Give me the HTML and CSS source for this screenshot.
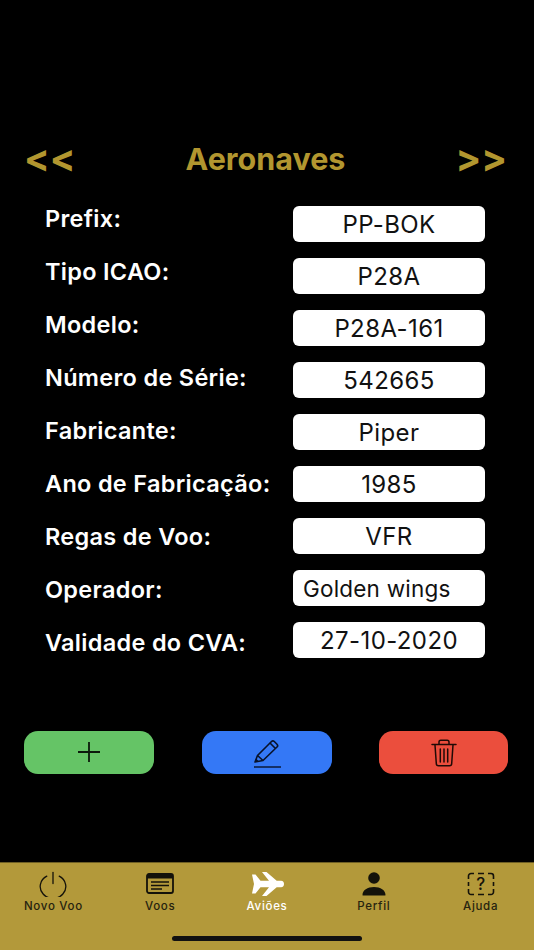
FILE: index.html
```html
<!DOCTYPE html>
<html lang="pt">
<head>
<meta charset="utf-8">
<title>Aeronaves</title>
<link rel="stylesheet" href="styles.css">
</head>
<body>
<div class="screen">
  <header class="header">
    <span class="nav">&lt;&lt;</span>
    <h1 class="title">Aeronaves</h1>
    <span class="nav">&gt;&gt;</span>
  </header>
  <main class="form">
    <div class="labels">
      <div class="label">Prefix:</div>
      <div class="label">Tipo ICAO:</div>
      <div class="label">Modelo:</div>
      <div class="label">Número de Série:</div>
      <div class="label">Fabricante:</div>
      <div class="label">Ano de Fabricação:</div>
      <div class="label">Regas de Voo:</div>
      <div class="label">Operador:</div>
      <div class="label">Validade do CVA:</div>
    </div>
    <div class="fields">
      <div class="field">PP-BOK</div>
      <div class="field">P28A</div>
      <div class="field">P28A-161</div>
      <div class="field">542665</div>
      <div class="field">Piper</div>
      <div class="field">1985</div>
      <div class="field">VFR</div>
      <div class="field field-left">Golden wings</div>
      <div class="field">27-10-2020</div>
    </div>
  </main>
  <div class="actions">
    <button class="action green" type="button" aria-label="Adicionar">
      <svg width="26" height="22" viewBox="0 0 26 22"><path d="M13 0v20M2 10h22" fill="none" stroke="#0c1a0c" stroke-width="1.8"/></svg>
    </button>
    <button class="action blue" type="button" aria-label="Editar">
      <svg width="30" height="34" viewBox="0 0 30 34"><g fill="none" stroke="#08122a" stroke-width="1.6" stroke-linejoin="round"><path d="M2 31h27" stroke-width="1.4"/><path d="M3 26l2.500-6.500L19.500 5.500a2 2 0 0 1 2.800 0l2.700 2.700a2 2 0 0 1 0 2.800L11 24.500z"/><path d="M5.500 19.500l5.500 5M18 7l5.500 5.500"/></g><path d="M3 26l1.200-3.400 2.300 2.300z" fill="#08122a"/></svg>
    </button>
    <button class="action red" type="button" aria-label="Apagar">
      <svg width="26" height="28" viewBox="0 0 26 28"><g fill="none" stroke="#200a06" stroke-width="1.5" stroke-linecap="round"><path d="M1 5.500h24"/><path d="M8 5V3a1.800 1.800 0 0 1 1.800-1.800h6.400A1.800 1.800 0 0 1 18 3v2"/><path d="M4 6l1.300 18.500A2.300 2.300 0 0 0 7.600 26.800h10.800a2.300 2.300 0 0 0 2.300-2.300L22 6"/><path d="M9.300 10v13M13 10v13M16.700 10v13"/></g></svg>
    </button>
  </div>
  <nav class="tabbar">
    <div class="tab">
      <svg class="tab-icon" width="30" height="26" viewBox="0 0 30 26"><g fill="none" stroke="#14120a" stroke-width="1.300" stroke-linecap="round"><path d="M8.800 5.200a12.800 11.800 0 1 0 12.400 0"/><path d="M15 1.500v11"/></g></svg>
      <span>Novo Voo</span>
    </div>
    <div class="tab">
      <svg class="tab-icon" width="30" height="26" viewBox="0 0 30 26"><rect x="2" y="3" width="26" height="19" rx="2" fill="none" stroke="#14120a" stroke-width="1.800"/><path d="M2 3h26v4.500H2z" fill="#14120a"/><path d="M6 11h18M6 14.500h18M6 18h11" stroke="#14120a" stroke-width="1.300" fill="none"/></svg>
      <span>Voos</span>
    </div>
    <div class="tab tab-active">
      <svg class="tab-icon" width="34" height="26" viewBox="0 0 34 26"><path d="M2 3.500h3.500L10.500 9.800H19L12 1h4.500l10.200 8.800h4.300c2.200 0 3 1.500 3 3.200s-.8 3.200-3 3.200h-4.300L16.500 25H12l7-8.800h-8.500L5.500 22.500H2l2-9.500z" fill="#fff"/></svg>
      <span>Aviões</span>
    </div>
    <div class="tab">
      <svg class="tab-icon" width="30" height="26" viewBox="0 0 30 26"><circle cx="15" cy="7" r="5.800" fill="#14120a"/><path d="M3.500 24c0-5 5-8 11.500-8s11.500 3 11.500 8c0 .5-.3.500-.8.500H4.300c-.5 0-.8 0-.8-.5z" fill="#14120a"/></svg>
      <span>Perfil</span>
    </div>
    <div class="tab">
      <svg class="tab-icon" width="30" height="26" viewBox="0 0 30 26"><path d="M8 2.500H5a2.500 2.500 0 0 0-2.500 2.500v3M12 2.500h6M22 2.500h3A2.500 2.500 0 0 1 27.500 5v3M27.500 11v4M27.500 18v3a2.500 2.500 0 0 1-2.500 2.500h-3M18 23.500h-6M8 23.500H5A2.500 2.500 0 0 1 2.500 21v-3M2.500 15v-4" fill="none" stroke="#14120a" stroke-width="1.600"/><text class="help-mark" x="15" y="19" text-anchor="middle">?</text></svg>
      <span>Ajuda</span>
    </div>
    <div class="home-indicator"></div>
  </nav>
</div>
</body>
</html>
```
FILE: styles.css
```css
* { box-sizing: border-box; }
html, body { margin: 0; padding: 0; background: #000; }
.screen {
  width: 534px;
  height: 950px;
  display: flex;
  flex-direction: column;
  background: #000;
  font-family: Inter, "Liberation Sans", sans-serif;
  overflow: hidden;
}
.header {
  display: flex;
  justify-content: space-between;
  align-items: center;
  height: 32px;
  margin-top: 142px;
  padding: 0 27px 0 24px;
  color: #b2962f;
  font-weight: 700;
}
.nav { font-size: 38px; line-height: 32px; }
.title { margin: 0; font-size: 30.500px; font-weight: 700; }
.form {
  display: flex;
  justify-content: space-between;
  margin-top: 32px;
  padding: 0 49px 0 45px;
}
.labels { display: flex; flex-direction: column; gap: 0; margin-top: -4px; }
.label {
  height: 53px;
  line-height: 34px;
  color: #fff;
  font-size: 23.500px;
  font-weight: 600;
  letter-spacing: 0.3px;
  white-space: nowrap;
}
.fields { display: flex; flex-direction: column; gap: 16px; width: 192px; }
.field {
  height: 36px;
  line-height: 37px;
  background: #fff;
  border-radius: 6px;
  color: #111;
  font-size: 24px;
  letter-spacing: 0.4px;
  text-align: center;
}
.field-left { text-align: left; padding-left: 10px; font-size: 22.500px; letter-spacing: 0.2px; }
.actions {
  display: flex;
  margin-top: 52px;
  padding-left: 24.250px;
}
.action {
  width: 129.500px;
  height: 43px;
  padding: 0;
  border: 0;
  border-radius: 14px;
  display: flex;
  align-items: center;
  justify-content: center;
}
.green { background: #65c466; }
.blue { background: #3478f6; margin-left: 48.500px; }
.red { background: #eb4e3d; margin-left: 47px; }
.tabbar {
  position: relative;
  margin-top: auto;
  height: 88px;
  display: flex;
  justify-content: space-around;
  padding: 8px 0 0;
  background: #b3993a;
  border-top: 1px solid #6e5f24;
}
.tab {
  width: 107px;
  display: flex;
  flex-direction: column;
  align-items: center;
  gap: 2px;
  color: #26230f;
  font-size: 11.500px;
  font-weight: 500;
  letter-spacing: 0.7px;
}
.tab-active { color: #fff; }
.tab-icon { display: block; }
.help-mark { font-family: Inter, sans-serif; font-size: 17px; font-weight: 500; fill: #14120a; }
.home-indicator {
  position: absolute;
  left: 172px;
  bottom: 9px;
  width: 190px;
  height: 5px;
  border-radius: 3px;
  background: #111;
}
```
